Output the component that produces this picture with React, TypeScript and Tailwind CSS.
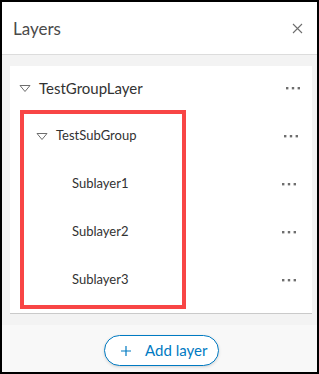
import React from 'react';

const font = { fontFamily: '"Lato", "Open Sans", sans-serif' };

const Dots: React.FC = () => (
  <svg width="16" height="4" viewBox="0 0 16 4" className="text-[#6e6e6e]">
    <rect x="1" y="1" width="2.4" height="2.4" fill="currentColor" />
    <rect x="6.8" y="1" width="2.4" height="2.4" fill="currentColor" />
    <rect x="12.6" y="1" width="2.4" height="2.4" fill="currentColor" />
  </svg>
);

const Caret: React.FC = () => (
  <svg width="12" height="9" viewBox="0 0 12 9" className="text-[#6e6e6e]">
    <path d="M1 1.5 L11 1.5 L6 7.5 Z" fill="none" stroke="currentColor" strokeWidth="1" strokeLinejoin="round" />
  </svg>
);

interface RowProps {
  label: string;
  indent: string;
  caret?: boolean;
  big?: boolean;
  height: string;
  dotsPad: string;
}

const Row: React.FC<RowProps> = ({ label, indent, caret, big, height, dotsPad }) => (
  <div className={`flex items-center ${height}`}>
    <div className={`flex items-center flex-1 ${indent}`}>
      {caret && (
        <span className="mr-[8px] flex items-center">
          <Caret />
        </span>
      )}
      <span className={big ? 'text-[15px] text-[#323232]' : 'text-[13px] text-[#323232]'}>{label}</span>
    </div>
    <div className={dotsPad}>
      <Dots />
    </div>
  </div>
);

export default function App() {
  return (
    <div className="w-[319px] h-[374px] border-2 border-black bg-white flex flex-col" style={font}>
      {/* Header */}
      <div className="h-[53px] flex items-center justify-between border-b border-[#dcdcdc] pl-[11px] pr-[14px]">
        <span className="text-[17px] text-[#4a4a4a] pt-[1px]">Layers</span>
        <svg width="11" height="11" viewBox="0 0 11 11" className="text-[#6e6e6e]">
          <path d="M1 1 L10 10 M10 1 L1 10" stroke="currentColor" strokeWidth="1.1" />
        </svg>
      </div>

      {/* List area */}
      <div className="bg-[#f3f3f3] pt-[11px] pl-[8px] pr-[5px] pb-[11px]">
        <div className="bg-white border-b border-[#cacaca] pb-[4px]">
          <Row label="TestGroupLayer" indent="pl-[9px]" caret big height="h-[44px]" dotsPad="pr-[11px]" />
          <div className="relative pt-[2px] pb-[5px]">
            <div className="absolute left-[10px] top-0 bottom-0 w-[166px] border-4 border-[#f84545]" />
            <Row label="TestSubGroup" indent="pl-[26px]" caret height="h-[48px]" dotsPad="pr-[13px]" />
            <Row label="Sublayer1" indent="pl-[62px]" height="h-[48px]" dotsPad="pr-[15px]" />
            <Row label="Sublayer2" indent="pl-[62px]" height="h-[48px]" dotsPad="pr-[15px]" />
            <Row label="Sublayer3" indent="pl-[62px]" height="h-[48px]" dotsPad="pr-[15px]" />
          </div>
        </div>
      </div>

      {/* Footer */}
      <div className="flex-1 bg-[#f8f8f8] flex justify-center pt-[10px] pl-[4px]">
        <button className="h-[31px] w-[115px] rounded-full border border-[#007ac2] bg-white shadow-[0_1px_3px_rgba(0,0,0,0.15)] flex items-center pl-[16px] text-[#007ac2]">
          <svg width="10" height="10" viewBox="0 0 10 10" className="mr-[14px]">
            <path d="M5 0 V10 M0 5 H10" stroke="currentColor" strokeWidth="1.2" />
          </svg>
          <span className="text-[15px]">Add layer</span>
        </button>
      </div>
    </div>
  );
}
